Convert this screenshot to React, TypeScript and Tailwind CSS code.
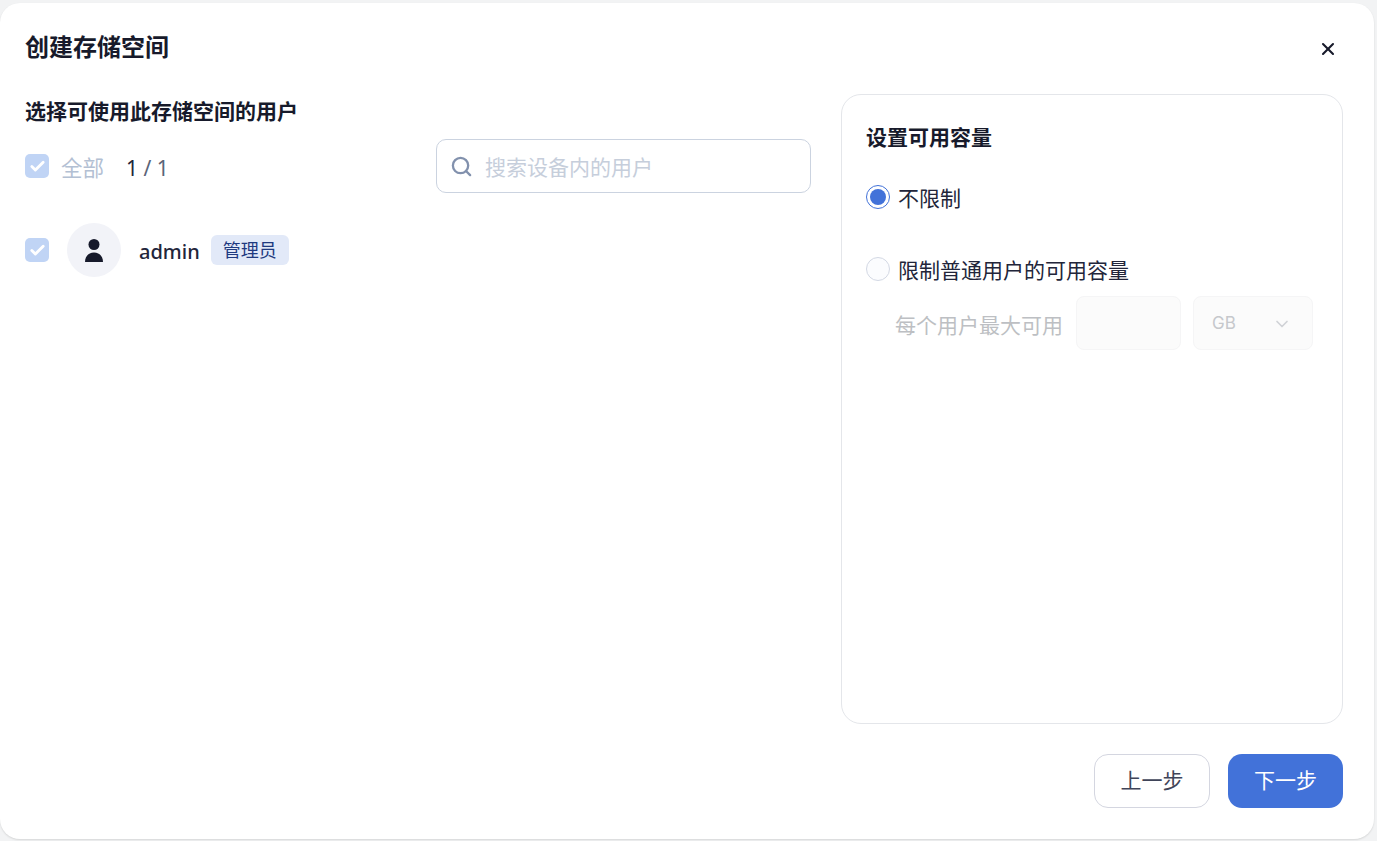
import React from "react";
import { Search, X, ChevronDown, Check } from "lucide-react";

function Box() {
  return (
    <span className="flex h-6 w-6 shrink-0 items-center justify-center rounded-[5px] bg-[#c0d4f5]">
      <Check className="h-[17px] w-[17px] text-white" strokeWidth={4} />
    </span>
  );
}

export default function App() {
  return (
    <div className="h-[841px] w-full overflow-hidden bg-[#f2f3f4] pt-[3px] font-['Noto_Sans','Noto_Sans_CJK_SC',sans-serif]">
      <div className="flex h-[836px] w-[1374px] flex-col rounded-[20px] bg-white pl-[25px] pr-[31px] shadow-[0_1px_2px_rgba(0,0,0,0.12)]">
        <header className="flex h-[91px] shrink-0 items-center justify-between pb-[2px]">
          <h1 className="pb-[2px] text-[24px] font-bold leading-8 text-[#171a2b]">创建存储空间</h1>
          <X className="mr-[5px] mt-[3px] h-5 w-5 text-[#171a2b]" strokeWidth={2.5} />
        </header>
        <div className="flex h-[630px] shrink-0 gap-[30px]">
          <section className="w-[786px] shrink-0">
            <h2 className="mt-[3px] text-[21px] font-bold leading-7 text-[#171a2b]">选择可使用此存储空间的用户</h2>
            <div className="mt-[14px] flex h-[54px] items-center justify-between">
              <div className="flex items-center">
                <Box />
                <span className="ml-3 pt-[3px] text-[21.5px] leading-8 text-[#b3c0d3]">全部</span>
                <span className="ml-[22px] pt-[3px] text-[21px] leading-8 text-[#5b6478]"><span className="text-[#22253a]">1</span> / 1</span>
              </div>
              <div className="flex h-[54px] w-[375px] items-center rounded-[10px] border border-[#cbd3e0] pl-[13px]">
                <Search className="h-[23px] w-[23px] text-[#8291ad]" strokeWidth={2.4} />
                <span className="ml-[12px] pt-[2px] text-[21px] leading-8 text-[#c6cedb]">搜索设备内的用户</span>
              </div>
            </div>
            <div className="mt-[30px] flex items-center">
              <Box />
              <span className="ml-[18px] flex h-[54px] w-[54px] items-center justify-center rounded-full bg-[#f2f3f8]">
                <svg viewBox="0 0 20 24" className="h-6 w-5" fill="#171a2b">
                  <circle cx="10" cy="6.5" r="5.5" />
                  <path d="M1 24c0-5.5 3.5-9.5 9-9.5s9 4 9 9.5z" />
                </svg>
              </span>
              <span className="ml-[18px] pt-[3px] text-[20px] font-medium leading-8 text-[#22253a]">admin</span>
              <span className="ml-[11px] flex h-[30px] w-[78px] items-center justify-center rounded-[6px] bg-[#e2e9f8] text-[18px] text-[#1f3a80]">管理员</span>
            </div>
          </section>
          <section className="w-[502px] shrink-0 rounded-[20px] border border-[#e4e6ea] px-6 pt-[26px]">
            <h2 className="text-[21px] font-bold leading-8 text-[#171a2b]">设置可用容量</h2>
            <div className="mt-[28px] flex items-center">
              <span className="flex h-6 w-6 items-center justify-center rounded-full border border-[#4272d9]">
                <span className="h-4 w-4 rounded-full bg-[#4272d9]" />
              </span>
              <span className="ml-2 pt-[3px] text-[21px] leading-7 text-[#22253a]">不限制</span>
            </div>
            <div className="mt-[41px] flex items-center">
              <span className="h-6 w-6 rounded-full border border-[#d3d8e4] bg-[#fbfcfe]" />
              <span className="ml-2 pt-[3px] text-[21px] leading-7 text-[#22253a]">限制普通用户的可用容量</span>
            </div>
            <div className="mt-[12px] flex items-center pl-[29px]">
              <span className="pt-[3px] text-[21px] leading-8 text-[#bdbfc3]">每个用户最大可用</span>
              <span className="ml-[13px] h-[54px] w-[105px] rounded-[8px] border border-[#f5f5f6] bg-[#fbfbfb]" />
              <span className="ml-3 flex h-[54px] w-[120px] items-center justify-between rounded-[8px] border border-[#f5f5f6] bg-[#fbfbfb] pl-[18px] pr-[20px] pt-[1px] font-['Inter',sans-serif] text-[17px] text-[#c6c8cc]">
                GB
                <ChevronDown className="h-5 w-5 text-[#d0d2d6]" />
              </span>
            </div>
          </section>
        </div>
        <footer className="mt-[30px] flex justify-end gap-[18px]">
          <button className="h-[54px] w-[116px] rounded-[14px] border border-[#d4d6e0] bg-white text-[21px] text-[#3f4459]">上一步</button>
          <button className="h-[54px] w-[115px] rounded-[14px] bg-[#4272d9] text-[21px] text-white">下一步</button>
        </footer>
      </div>
    </div>
  );
}
